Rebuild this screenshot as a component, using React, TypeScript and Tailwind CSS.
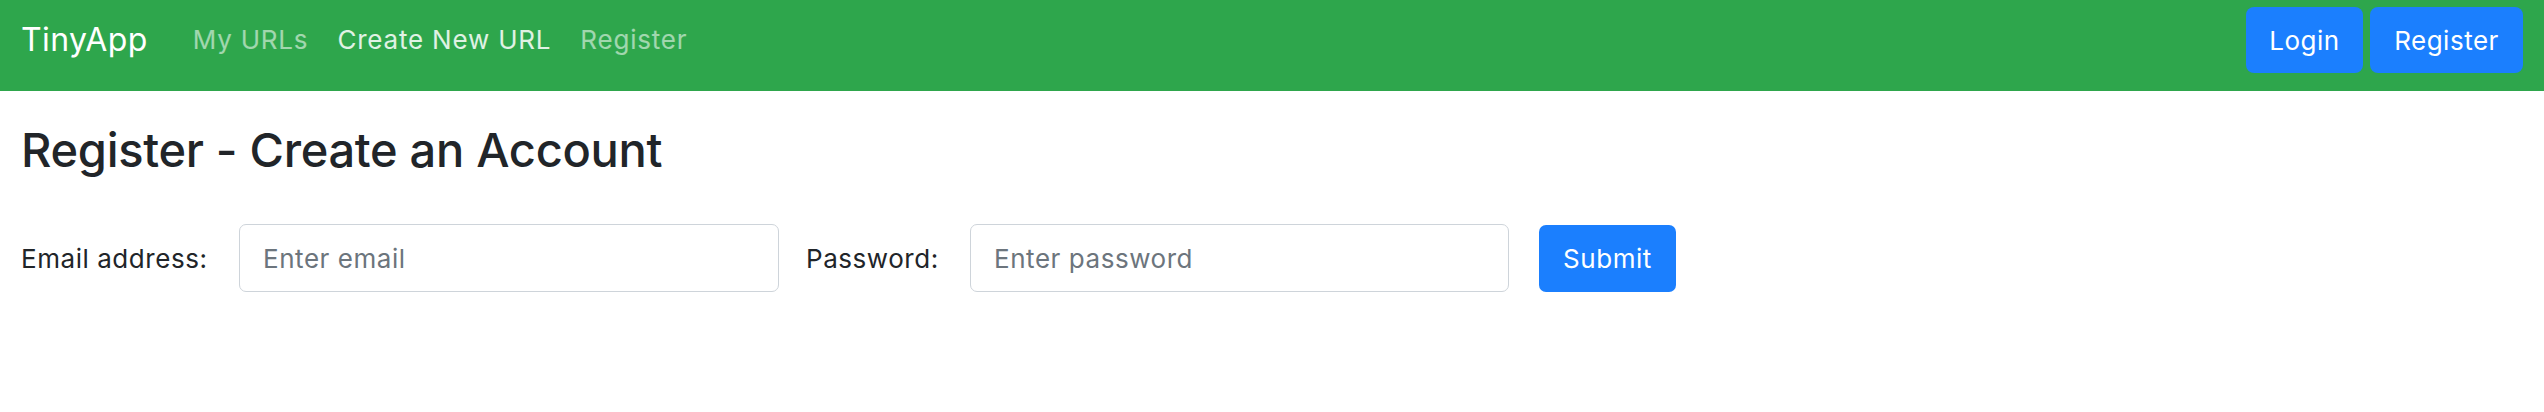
import React from 'react';

const navLinks = [
	{ label: 'My URLs', className: 'text-white/55' },
	{ label: 'Create New URL', className: 'text-white/85' },
	{ label: 'Register', className: 'text-white/55' },
];

const App = (): JSX.Element => {
	return (
		<div className="w-[2544px] h-[412px] bg-white text-[#212529]" style={{ fontFamily: 'Inter, "Noto Sans", sans-serif' }}>
			<nav className="h-[91px] bg-[#2ea64c] flex items-start justify-between pl-[21px] pr-[21px] pt-[7px]">
				<div className="h-[66px] flex items-center">
					<a className="text-[32px] text-white mr-[45px] leading-none tracking-[0.4px]">TinyApp</a>
					<ul className="flex items-center gap-[29px] text-[26px] leading-none tracking-[0.8px]">
						{navLinks.map((link) => (
							<li key={link.label} className={link.className}>{link.label}</li>
						))}
					</ul>
				</div>
				<div className="flex gap-[7px] tracking-[0.5px]">
					<button className="h-[66px] w-[117px] rounded-[8px] bg-[#1b7ffe] text-white text-[26px]">Login</button>
					<button className="h-[66px] w-[153px] rounded-[8px] bg-[#1b7ffe] text-white text-[26px]">Register</button>
				</div>
			</nav>
			<main className="px-[21px]">
				<h2 className="text-[47px] font-medium leading-none mt-[35px] tracking-[-0.3px]">Register - Create an Account</h2>
				<form className="flex items-center mt-[51px] text-[26px] tracking-[0.55px]">
					<label className="w-[218px]">Email address:</label>
					<input className="h-[68px] w-[540px] rounded-[7px] border border-[#ced4da] px-[23px] placeholder:text-[#6c757d] outline-none" placeholder="Enter email" />
					<label className="ml-[27px] w-[164px]">Password:</label>
					<input className="h-[68px] w-[539px] rounded-[7px] border border-[#ced4da] px-[23px] placeholder:text-[#6c757d] outline-none" placeholder="Enter password" />
					<button type="button" className="ml-[30px] h-[67px] w-[137px] rounded-[7px] bg-[#1b7ffe] text-white">Submit</button>
				</form>
			</main>
		</div>
	);
};

export default App;
